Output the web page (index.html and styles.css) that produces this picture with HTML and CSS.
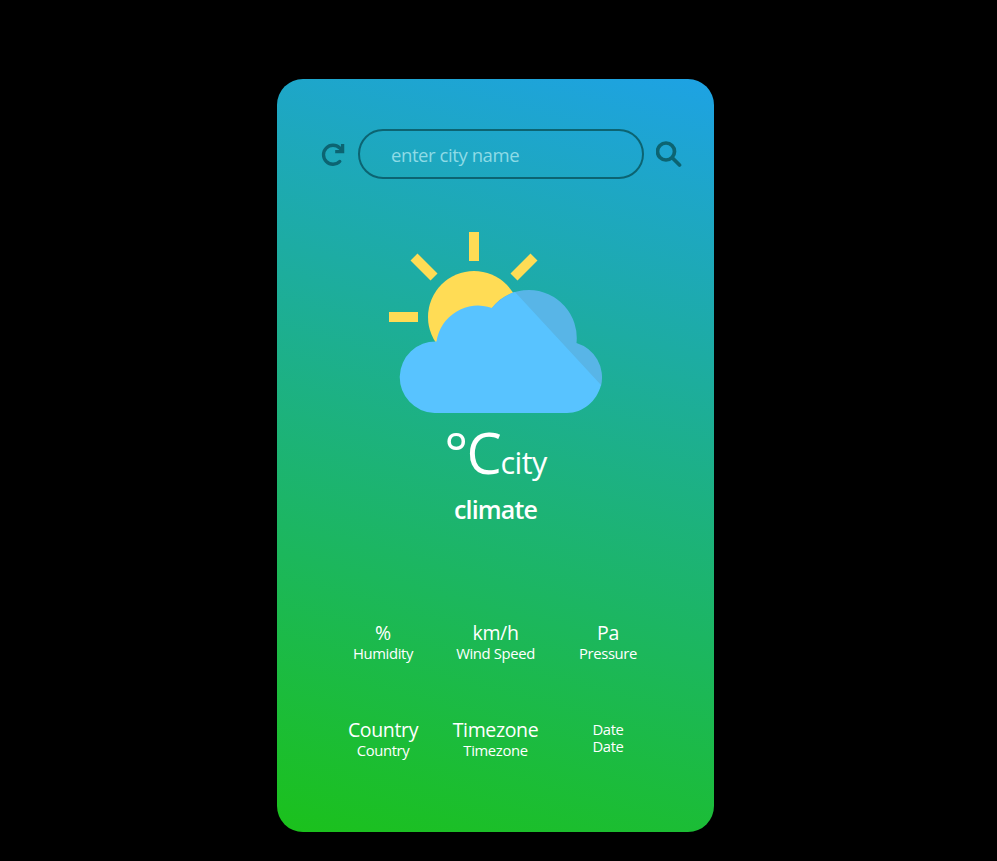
FILE: index.html
```html
<!DOCTYPE html>
<html lang="en">
<head>
<meta charset="utf-8">
<title>Weather</title>
<link rel="stylesheet" href="styles.css">
</head>
<body>
<main class="card">
  <form class="search">
    <svg class="icon refresh" viewBox="0 0 25 25"><path d="M18.800 19.400A9.500 9.500 0 1 1 18.700 6L21 8.500"/><path class="arrow" d="M21.600 2v7.600H14.200"/></svg>
    <input class="field" type="text" placeholder="enter city name" aria-label="City">
    <svg class="icon" viewBox="0 0 26 26"><circle cx="10" cy="10.5" r="8.5"/><path d="M16.500 17l7 7"/></svg>
  </form>
  <svg class="weather" viewBox="0 0 214 182">
    <g class="sun"><circle cx="85" cy="85" r="46"/><path d="M80 0h10v29H80zM0 80h29v10H0zM28.500 21.500l20 20-7 7-20-20zM141.500 21.500l7 7-20 20-7-7z"/></g>
    <path class="shade" d="M102 77C112 64 125 58 140 58a48 48 0 0 1 47.500 53a36 36 0 0 1 24.500 43z"/>
    <path class="cloud" d="M45.500 181a35.750 35.750 0 1 1 2-71.500A42 42 0 0 1 103 76c6-7 14-13 23-16l86 93c-4 16-18 28-34 28z"/>
  </svg>
  <div class="reading"><span class="temp"><span class="degree">°</span>C</span><span class="city">city</span></div>
  <div class="climate">climate</div>
  <section class="stats">
    <div><p class="value">%</p><p>Humidity</p></div>
    <div><p class="value">km/h</p><p>Wind Speed</p></div>
    <div><p class="value">Pa</p><p>Pressure</p></div>
    <div><p class="value">Country</p><p>Country</p></div>
    <div><p class="value">Timezone</p><p>Timezone</p></div>
    <div class="dates"><p>Date</p><p>Date</p></div>
  </section>
</main>
</body>
</html>
```
FILE: styles.css
```css
* { box-sizing: border-box; margin: 0; }
body { background: #000; color: #fff; font-family: "Segoe UI", "Open Sans", "Noto Sans", sans-serif; }
.card { width: 437px; height: 753px; margin: 79px 0 0 277px; padding-top: 50px; border-radius: 26px; background: linear-gradient(15deg, #1bc11b, #1ea2e4); display: flow-root; }
.search { display: flex; align-items: center; height: 50px; padding-left: 44px; gap: 12px; }
.icon { width: 26px; height: 26px; fill: none; stroke: #0c6472; stroke-width: 3.7; stroke-linecap: round; }
.refresh { width: 25px; height: 25px; stroke-width: 3.3; }
.arrow { stroke-linecap: butt; }
.field { width: 286px; height: 50px; border: 2px solid #0c6472; border-radius: 25px; padding: 0 32px 0 31px; background: transparent; color: #fff; font: 18.500px "Open Sans", sans-serif; letter-spacing: -.42px; outline: 0; }
.field::placeholder { color: #8edbe6; opacity: 1; }
.weather { display: block; width: 214px; height: 182px; margin: 53px 0 0 112px; }
.sun { fill: #ffdc55; }
.shade { fill: #58b5e7; }
.cloud { fill: #58c3ff; }
.reading { height: 76px; text-align: center; line-height: 76px; white-space: nowrap; }
.temp { font-size: 56px; letter-spacing: -1.500px; }
.degree { font-weight: 500; }
.city { font-size: 30.500px; letter-spacing: -.5px; }
.climate { text-align: center; font-size: 25px; font-weight: 600; line-height: 38px; letter-spacing: -.85px; }
.stats { display: grid; grid-template-columns: repeat(3, 112.500px); grid-template-rows: 97px 97px; justify-content: center; margin-top: 94px; text-align: center; font-size: 14.800px; line-height: 17px; letter-spacing: -.35px; }
.value { font-size: 19.500px; line-height: 22px; margin-bottom: 1px; }
.dates { padding-top: 2px; }
```
